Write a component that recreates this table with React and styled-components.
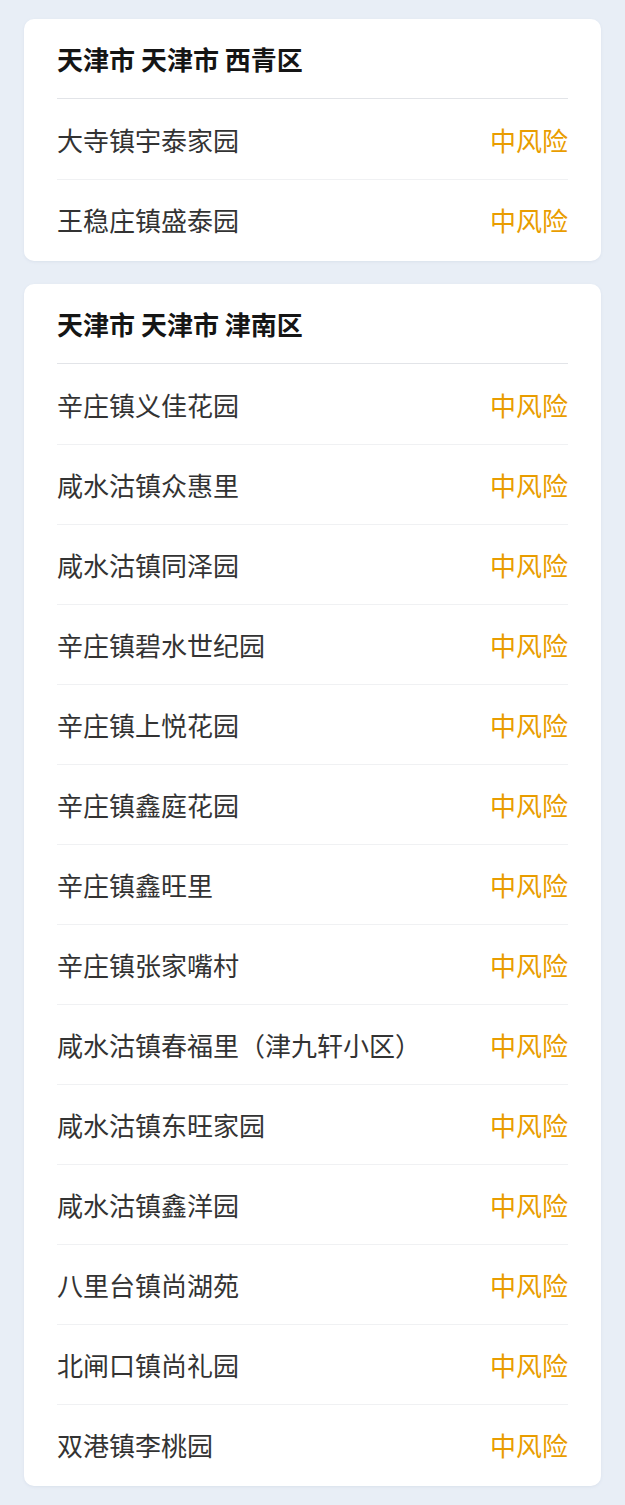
import React from 'react';
import styled, { createGlobalStyle } from 'styled-components';

const data = [
	{
		region: '天津市 天津市 西青区',
		places: ['大寺镇宇泰家园', '王稳庄镇盛泰园'],
	},
	{
		region: '天津市 天津市 津南区',
		places: [
			'辛庄镇义佳花园',
			'咸水沽镇众惠里',
			'咸水沽镇同泽园',
			'辛庄镇碧水世纪园',
			'辛庄镇上悦花园',
			'辛庄镇鑫庭花园',
			'辛庄镇鑫旺里',
			'辛庄镇张家嘴村',
			'咸水沽镇春福里（津九轩小区）',
			'咸水沽镇东旺家园',
			'咸水沽镇鑫洋园',
			'八里台镇尚湖苑',
			'北闸口镇尚礼园',
			'双港镇李桃园',
		],
	},
];

export default function App() {
	return (
		<>
			<GlobalStyle />
			<Page>
				{data.map((group) => (
					<Card key={group.region}>
						<Header>{group.region}</Header>
						{group.places.map((place, i) => (
							<Row key={place} first={i === 0}>
								<Place>{place}</Place>
								<Risk>中风险</Risk>
							</Row>
						))}
					</Card>
				))}
			</Page>
		</>
	);
}

const GlobalStyle = createGlobalStyle`
	body {
		margin: 0;
		background: #e8eef6;
		font-family: "Noto Sans CJK SC", "Noto Sans", sans-serif;
	}
`;

const Page = styled.div`
	display: flex;
	flex-direction: column;
	gap: 23px;
	padding: 19px 24px 18px;
`;

const Card = styled.div`
	background: #fff;
	border-radius: 10px;
	padding: 0 33px 2px;
	box-shadow: 0 1px 3px rgba(120, 140, 170, 0.12);
`;

const Header = styled.div`
	box-sizing: border-box;
	height: 80px;
	padding-top: 25px;
	line-height: 30px;
	font-size: 26px;
	font-weight: 700;
	color: #151515;
	border-bottom: 1px solid #e2e4e8;
`;

const Row = styled.div`
	box-sizing: border-box;
	height: 80px;
	display: flex;
	align-items: center;
	justify-content: space-between;
	border-top: ${(p) => (p.first ? 'none' : '1px solid #f0f1f3')};
	font-size: 26px;
`;

const Place = styled.span`
	color: #333;
`;

const Risk = styled.span`
	color: #e99d00;
`;
